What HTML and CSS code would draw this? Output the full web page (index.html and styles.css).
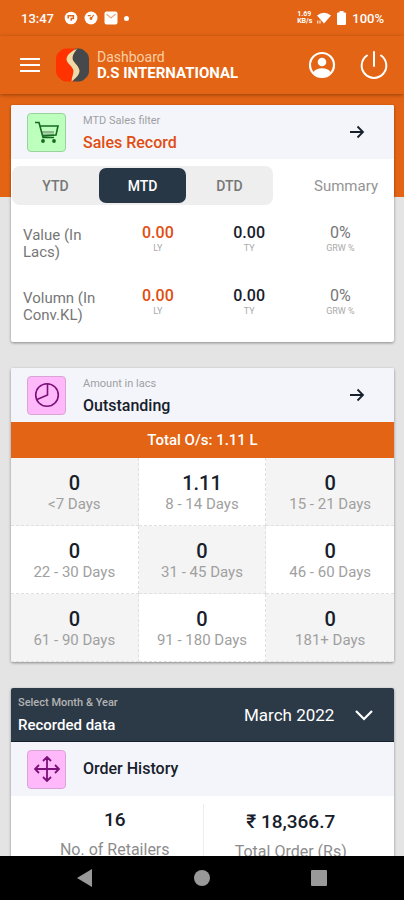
FILE: index.html
```html
<!DOCTYPE html>
<html lang="en">
<head>
<meta charset="utf-8">
<meta name="viewport" content="width=device-width, initial-scale=1">
<title>Dashboard</title>
<link rel="stylesheet" href="styles.css">
</head>
<body>
<div class="status">
  <span class="clock">13:47</span>
  <svg class="notif" viewBox="0 0 14 14" aria-hidden="true"><circle cx="7" cy="7" r="6.3" fill="#fff"/><path d="M4.200 7.500V4.800h5.200v2.800H7.200v2.200" fill="none" stroke="#e36414" stroke-width="1.500"/></svg>
  <svg class="notif" viewBox="0 0 14 14" aria-hidden="true"><circle cx="7" cy="7" r="6.5" fill="#fff"/><path d="M3.800 4.600h3M7 7.500l2.800-3.500" fill="none" stroke="#e36414" stroke-width="1.200"/><circle cx="7" cy="7.500" r="1.400" fill="#e36414"/></svg>
  <svg class="notif" viewBox="0 0 14 14" aria-hidden="true"><rect x=".5" y=".5" width="13" height="13" rx="2" fill="#fff"/><path d="M2.500 3l4.500 4 4.500-4" fill="none" stroke="#eda67c" stroke-width="1.100"/></svg>
  <span class="dot"></span>
  <span class="speed"><span>1.69</span><span>KB/s</span></span>
  <svg class="wifi" viewBox="0 0 14 12" aria-hidden="true"><path d="M0 3.500Q7-2.200 14 3.500L7 11.500z" fill="#fff"/><path d="M.8 8.500v3M3 8.500v3" stroke="#fff" stroke-width="1"/></svg>
  <svg class="battery" viewBox="0 0 9 14" aria-hidden="true"><path d="M2.500 0h4v1.500H8a1 1 0 0 1 1 1V13a1 1 0 0 1-1 1H1a1 1 0 0 1-1-1V2.500a1 1 0 0 1 1-1h1.500z" fill="#fff"/></svg>
  <span class="percent">100%</span>
</div>
<header class="appbar">
  <button class="icon-btn menu" aria-label="Menu"><svg viewBox="0 0 20 14" width="20" height="14"><path d="M0 1h20M0 7h20M0 13h20" stroke="#fff" stroke-width="1.800"/></svg></button>
  <svg class="logo" viewBox="0 0 34 34" aria-hidden="true">
    <path d="M20 0H10Q7 0 5 2L2 5Q0 7 0 10v14q0 3 2 5l3 3q2 2 5 2h7c4-4 7-7 6-11-1-5-9-8-9-13 0-4 3-8 6-10z" fill="#ff3200"/>
    <path d="M20 0h4q3 0 5 2l3 3q2 2 2 5v14q0 3-2 5l-3 3q-2 2-5 2h-7c4-5 8-8 7-12-1-5-7-8-7-12 0-4 1-7 3-10z" fill="#46494b"/>
    <path d="M22 0c-6 3-12 7-11 12 1 4 7 7 7 11 0 4-2 7-2 11 4-3 9-7 8-12-1-5-7-8-7-12 0-4 3-7 5-10z" fill="#eddcaa"/>
  </svg>
  <div class="heading"><span class="screen">Dashboard</span><h1>D.S INTERNATIONAL</h1></div>
  <button class="icon-btn" aria-label="Account"><svg viewBox="0 0 28 28" width="28" height="28"><circle cx="14" cy="14" r="12" fill="none" stroke="#fff" stroke-width="2.200"/><circle cx="14" cy="11" r="4.300" fill="#fff"/><path d="M5.500 21c3-5 14-5 17 0-4 6-13 6-17 0z" fill="#fff"/></svg></button>
  <button class="icon-btn power" aria-label="Log out"><svg viewBox="0 0 28 28" width="28" height="28"><path d="M14 1v14M7 4.500a12.300 12.300 0 1 0 14 0" fill="none" stroke="#fff" stroke-width="2" stroke-linecap="round"/></svg></button>
</header>
<main>
  <section class="card sales">
    <div class="card-head">
      <span class="tile green"><svg viewBox="0 0 26 26" width="26" height="26"><path d="M8 13h12M8 15.500h12" stroke="#8cb88c" stroke-width="2"/><path d="M1 3.500h4l4 15h11M5.500 7H24l-2 9-14 1" fill="none" stroke="#146b1e" stroke-width="1.600"/><circle cx="9" cy="22" r="1.900" fill="#146b1e"/><circle cx="20" cy="22" r="1.900" fill="#146b1e"/></svg></span>
      <div class="titles"><span class="sub">MTD Sales filter</span><h2 class="accent">Sales Record</h2></div>
      <button class="icon-btn go" aria-label="Open sales record"><svg viewBox="0 0 16 16" width="16" height="16"><path d="M1 8h13M8.500 2.500L14 8l-5.500 5.500" fill="none" stroke="#17202a" stroke-width="1.800"/></svg></button>
    </div>
    <div class="filters">
      <div class="tabs"><button>YTD</button><button class="active">MTD</button><button>DTD</button></div>
      <a class="summary" href="#">Summary</a>
    </div>
    <table class="figures">
      <tr><th scope="row">Value (In Lacs)</th><td class="ly">0.00<small>LY</small></td><td class="ty">0.00<small>TY</small></td><td>0%<small>GRW %</small></td></tr>
      <tr><th scope="row">Volumn (In Conv.KL)</th><td class="ly">0.00<small>LY</small></td><td class="ty">0.00<small>TY</small></td><td>0%<small>GRW %</small></td></tr>
    </table>
  </section>

  <section class="card">
    <div class="card-head">
      <span class="tile pink"><svg viewBox="0 0 26 26" width="26" height="26"><circle cx="13" cy="13" r="11.300" fill="none" stroke="#7b1078" stroke-width="1.600"/><path d="M13.500 1.700v11.300L3 17.500" fill="none" stroke="#7b1078" stroke-width="1.600"/></svg></span>
      <div class="titles"><span class="sub">Amount in lacs</span><h2>Outstanding</h2></div>
      <button class="icon-btn go" aria-label="Open outstanding"><svg viewBox="0 0 16 16" width="16" height="16"><path d="M1 8h13M8.500 2.500L14 8l-5.500 5.500" fill="none" stroke="#17202a" stroke-width="1.800"/></svg></button>
    </div>
    <p class="total">Total O/s: 1.11 L</p>
    <div class="ages">
      <div><b>0</b><span>&lt;7 Days</span></div>
      <div><b>1.11</b><span>8 - 14 Days</span></div>
      <div><b>0</b><span>15 - 21 Days</span></div>
      <div><b>0</b><span>22 - 30 Days</span></div>
      <div><b>0</b><span>31 - 45 Days</span></div>
      <div><b>0</b><span>46 - 60 Days</span></div>
      <div><b>0</b><span>61 - 90 Days</span></div>
      <div><b>0</b><span>91 - 180 Days</span></div>
      <div><b>0</b><span>181+ Days</span></div>
    </div>
  </section>

  <section class="card">
    <div class="period">
      <label for="month"><span>Select Month &amp; Year</span><strong>Recorded data</strong></label>
      <div class="picker">
        <select id="month"><option>March 2022</option></select>
        <svg viewBox="0 0 18 12" width="18" height="12" aria-hidden="true"><path d="M1 2l8 8 8-8" fill="none" stroke="#fff" stroke-width="2.200"/></svg>
      </div>
    </div>
    <div class="card-head">
      <span class="tile pink"><svg viewBox="0 0 26 26" width="26" height="26"><path d="M1.500 13h23M13 1.500v23M9 5l4-4 4 4M9 21l4 4 4-4M5 9l-4 4 4 4M21 9l4 4-4 4" fill="none" stroke="#7b1078" stroke-width="1.800"/></svg></span>
      <h2>Order History</h2>
    </div>
    <div class="orders">
      <div><b>16</b><span>No. of Retailers</span></div>
      <div><b>₹ 18,366.7</b><span>Total Order (Rs)</span></div>
    </div>
  </section>
</main>
<nav class="system">
  <button class="icon-btn" aria-label="Back"><svg viewBox="0 0 18 18" width="18" height="18"><path d="M1 9L16 0v18z" fill="#999"/></svg></button>
  <button class="icon-btn" aria-label="Home"><svg viewBox="0 0 18 18" width="18" height="18"><circle cx="9" cy="9" r="8" fill="#999"/></svg></button>
  <button class="icon-btn" aria-label="Recent apps"><svg viewBox="0 0 18 18" width="18" height="18"><rect x="1" y="1" width="16" height="16" rx="1" fill="#999"/></svg></button>
</nav>
</body>
</html>
```
FILE: styles.css
```css
* { box-sizing: border-box; }

body {
  margin: 0;
  height: 100vh;
  display: flex;
  flex-direction: column;
  background: #e4e4e4;
  color: #17202a;
  font-family: Roboto, "Noto Sans", sans-serif;
  font-size: 16px;
}

h1, h2, p { margin: 0; }
svg { display: block; flex: none; }
button, select { font: inherit; color: inherit; border: 0; background: none; padding: 0; }
.icon-btn { display: grid; place-items: center; }

.status {
  flex: none;
  height: 36px;
  padding: 0 20px 0 21px;
  display: flex;
  align-items: center;
  background: #e36414;
  color: #fff;
  font-size: 13px;
  font-weight: 500;
}
.clock { margin-right: 10px; }
.notif { width: 14px; height: 14px; margin-right: 6px; }
.dot { width: 5px; height: 5px; border-radius: 50%; background: #fff; }
.speed { margin-left: auto; display: grid; font-size: 7px; line-height: 7px; font-weight: 700; }
.wifi { width: 14px; height: 12px; margin: 0 6px 0 5px; }
.battery { width: 9px; height: 14px; margin-right: 6px; }

.appbar {
  flex: none;
  height: 58px;
  padding: 0 16px 0 20px;
  display: flex;
  align-items: center;
  background: #e36414;
  color: #fff;
  box-shadow: 0 1px 4px rgba(0, 0, 0, .35);
  z-index: 1;
}
.logo { width: 33px; height: 34px; margin: 0 8px 0 16px; }
.heading { flex: 1; }
.screen { display: block; font-size: 14px; line-height: 15px; color: #fbcfa6; }
h1 { font-size: 15px; line-height: 16px; font-weight: 700; }
.power { margin-left: 24px; }

main {
  flex: 1;
  min-height: 0;
  overflow-y: auto;
  scrollbar-width: none;
  padding: 11px 10px 16px 11px;
  background: linear-gradient(#e36414 103px, #e4e4e4 103px);
}

.card {
  margin-bottom: 26px;
  border-radius: 2px;
  overflow: hidden;
  background: #fff;
  box-shadow: 0 1px 3px rgba(0, 0, 0, .4);
}
.card-head {
  height: 54px;
  padding: 0 29px 0 16px;
  display: flex;
  align-items: center;
  gap: 17px;
  background: #f3f5fa;
}
.tile {
  width: 39px;
  height: 39px;
  display: grid;
  place-items: center;
  border: 1px solid;
  border-radius: 4px;
}
.green { background: #bdffbd; border-color: #9ad29e; }
.pink { background: #ffb8fa; border-color: #d9a3d8; }
.titles { flex: 1; padding-top: 2px; }
.sub { display: block; font-size: 11px; line-height: 14px; color: #a0a0a3; }
h2 { font-size: 16px; line-height: 20px; font-weight: 500; }
.titles h2 { margin-top: 5px; }
.accent { color: #e14d10; }

.filters {
  display: flex;
  align-items: center;
  padding: 7px 16px 0 1px;
  background: #fff;
}
.tabs {
  flex: none;
  display: flex;
  padding: 2px 0;
  border-radius: 8px;
  background: #eee;
}
.tabs button {
  width: 87px;
  height: 35px;
  border-radius: 7px;
  font-size: 14px;
  font-weight: 500;
  color: #777;
}
.tabs .active { background: #283746; color: #fff; }
.summary { margin-left: auto; font-size: 15px; color: #949494; text-decoration: none; }

.figures {
  width: 100%;
  padding: 0 8px 11px 0;
  border-spacing: 0;
  table-layout: fixed;
}
.figures tr { height: 63px; }
.figures th, .figures td { vertical-align: top; font-weight: 400; color: #777; }
.figures th { width: 27%; padding: 22px 0 0 12px; text-align: left; font-size: 15px; line-height: 17px; }
.figures td { padding: 18px 0 0; text-align: center; font-size: 16px; line-height: 20px; }
.figures small { display: block; font-size: 9px; line-height: 10px; color: #aaa; font-weight: 400; }
.figures .ly { color: #e14d10; font-weight: 500; }
.figures .ty { color: #17202a; font-weight: 500; }

.total {
  line-height: 36px;
  text-align: center;
  font-size: 15px;
  font-weight: 500;
  color: #fff;
  background: #e36414;
}
.ages { display: grid; grid-template-columns: repeat(3, 1fr); }
.ages div {
  height: 68px;
  padding-top: 13px;
  text-align: center;
  border-right: 1px dashed #e0e0e0;
  border-bottom: 1px dashed #e0e0e0;
}
.ages div:nth-child(3n) { border-right: 0; }
.ages div:nth-child(odd) { background: #f4f4f4; }
.ages b, .orders b { display: block; font-size: 20px; line-height: 24px; font-weight: 500; }
.ages span { display: block; font-size: 15px; line-height: 19px; color: #a0a0a0; }

.period {
  height: 54px;
  padding: 0 21px 0 7px;
  display: flex;
  align-items: center;
  justify-content: space-between;
  background: #2c3947;
  border-bottom: 1px solid #16202b;
  color: #fff;
}
.period label span { display: block; font-size: 11px; line-height: 14px; font-weight: 500; color: #b3b3b3; }
.period strong { display: block; margin-top: 6px; font-size: 15px; line-height: 18px; font-weight: 500; }
.picker { display: flex; align-items: center; gap: 20px; }
select { appearance: none; font-size: 17px; }

.orders { display: grid; grid-template-columns: 1fr 1fr; padding-top: 8px; }
.orders div { padding: 4px 0 12px 16px; text-align: center; }
.orders div + div { padding: 6px 16px 12px 0; border-left: 1px solid #eee; }
.orders b { font-size: 19px; }
.orders span { display: block; margin-top: 8px; font-size: 16px; line-height: 20px; color: #8c8c8c; }

.system {
  flex: none;
  height: 44px;
  padding: 0 26px;
  display: grid;
  grid-template-columns: repeat(3, 1fr);
  background: #000;
}
```
